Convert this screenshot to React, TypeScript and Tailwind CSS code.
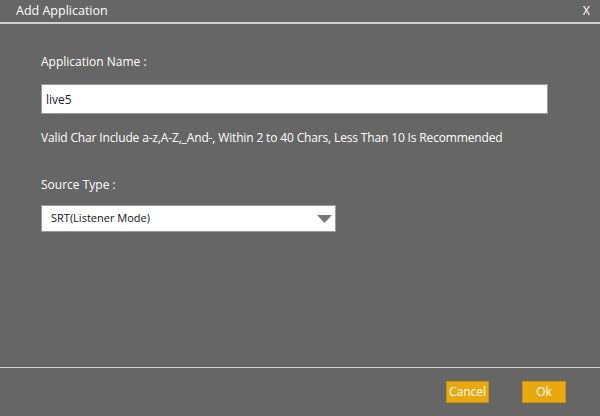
import { useState } from 'react'

export default function App() {
  const [name, setName] = useState('live5')
  const [source, setSource] = useState('SRT(Listener Mode)')

  return (
    <div
      className="w-[600px] h-[416px] bg-[#666666] flex flex-col text-white"
      style={{ fontFamily: '"Open Sans", "Noto Sans", sans-serif' }}
    >
      <div className="h-[22px] flex items-center justify-between pl-[16px] pr-[10px] border-b-2 border-[#d0d0d0] box-content">
        <span className="text-[12.5px] leading-none">Add Application</span>
        <button className="text-[12.5px] leading-none">X</button>
      </div>

      <div className="flex-1 flex flex-col pl-[41px] pt-[28px]">
        <label className="text-[12px] leading-[20px]">Application Name :</label>
        <input
          type="text"
          value={name}
          onChange={(e) => setName(e.target.value)}
          className="mt-[12px] w-[507px] h-[30px] bg-white border border-[#9a9a9a] px-[4px] text-[12px] text-[#222222] outline-none"
        />
        <p className="mt-[14px] text-[12px] leading-[20px] tracking-[-0.15px]">
          Valid Char Include a-z,A-Z,_And-, Within 2 to 40 Chars, Less Than 10 Is Recommended
        </p>
        <label className="mt-[27px] text-[12px] leading-[20px]">Source Type :</label>
        <div className="mt-[10px] w-[295px] h-[27px] bg-white border border-[#9a9a9a] flex items-center justify-between pl-[9px] pr-[2px]">
          <span className="text-[11px] text-[#111111]">{source}</span>
          <svg width="17" height="10" viewBox="0 0 17 10" onClick={() => setSource(source)}>
            <polygon points="1,1 16,1 8.5,9" fill="#777777" />
          </svg>
        </div>
      </div>

      <div className="h-[49px] border-t border-[#cfcfcf] flex items-center justify-end gap-[33px] pr-[34px]">
        <button className="w-[43px] h-[22px] bg-[#e8a90f] border border-[#c9900a] text-[12px] leading-none">Cancel</button>
        <button className="w-[44px] h-[22px] bg-[#e8a90f] border border-[#c9900a] text-[12px] leading-none">Ok</button>
      </div>
    </div>
  )
}
